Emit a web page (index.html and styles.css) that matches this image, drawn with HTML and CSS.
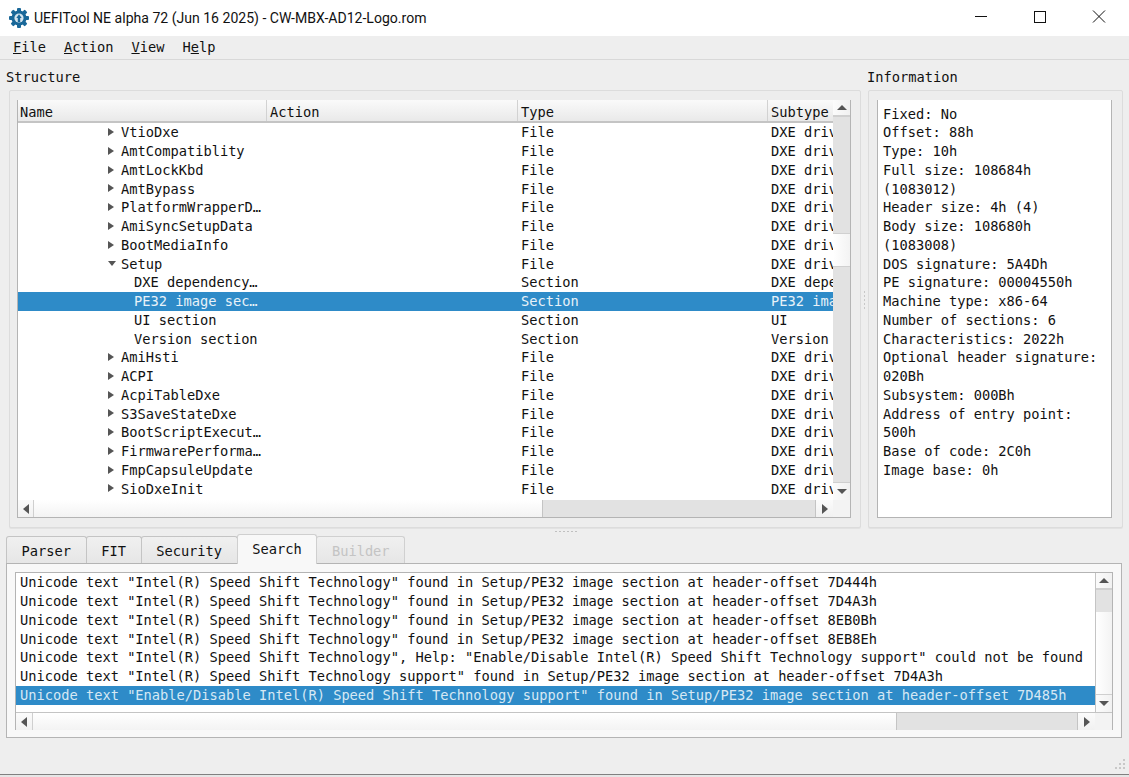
FILE: index.html
```html
<!DOCTYPE html>
<html lang="en">
<head>
<meta charset="utf-8">
<title>UEFITool NE alpha 72 (Jun 16 2025) - CW-MBX-AD12-Logo.rom</title>
<link rel="stylesheet" href="styles.css">
</head>
<body>
<div class="window">
  <header class="titlebar">
    <svg class="appicon" viewBox="0 0 20 20" width="20" height="20"><circle cx="10" cy="10" r="7.6" fill="#1a6899"/><g fill="#1a6899"><rect x="8" y="0" width="4" height="20" rx="1"/><rect x="0" y="8" width="20" height="4" rx="1"/><rect x="8" y="0" width="4" height="20" rx="1" transform="rotate(45 10 10)"/><rect x="8" y="0" width="4" height="20" rx="1" transform="rotate(-45 10 10)"/></g><circle cx="10" cy="10" r="4.6" fill="#d4e4ee"/><path d="M8.8 14V10L7.3 10 10 6.3 12.7 10 11.2 10V14Z" fill="#1a6899"/></svg>
    <span class="title">UEFITool NE alpha 72 (Jun 16 2025) - CW-MBX-AD12-Logo.rom</span>
    <div class="winbtns">
      <svg class="winbtn" viewBox="0 0 46 36"><path d="M17 16.5H29" stroke="#111" fill="none"/></svg>
      <svg class="winbtn" viewBox="0 0 46 36"><rect x="17.5" y="11.5" width="11" height="11" stroke="#111" fill="none"/></svg>
      <svg class="winbtn" viewBox="0 0 46 36"><path d="M17 10.5L29 22.5M29 10.5L17 22.5" stroke="#111" fill="none"/></svg>
    </div>
  </header>
  <nav class="menubar">
    <span class="menu"><u>F</u>ile</span>
    <span class="menu"><u>A</u>ction</span>
    <span class="menu"><u>V</u>iew</span>
    <span class="menu">H<u>e</u>lp</span>
  </nav>
  <main class="content">
    <div class="upper">
      <section class="structure">
        <div class="label">Structure</div>
        <div class="group">
          <div class="tree">
            <div class="tree-main">
              <div class="tree-view">
                <div class="thead">
                  <span class="th c1">Name</span><span class="th c2">Action</span><span class="th c3">Type</span><span class="th c4">Subtype</span>
                </div>
                <div class="row"><span class="c1 d1"><i class="arr r"></i><b>VtioDxe</b></span><span class="c2"></span><span class="c3">File</span><span class="c4">DXE driver</span></div>
                <div class="row"><span class="c1 d1"><i class="arr r"></i><b>AmtCompatiblity</b></span><span class="c2"></span><span class="c3">File</span><span class="c4">DXE driver</span></div>
                <div class="row"><span class="c1 d1"><i class="arr r"></i><b>AmtLockKbd</b></span><span class="c2"></span><span class="c3">File</span><span class="c4">DXE driver</span></div>
                <div class="row"><span class="c1 d1"><i class="arr r"></i><b>AmtBypass</b></span><span class="c2"></span><span class="c3">File</span><span class="c4">DXE driver</span></div>
                <div class="row"><span class="c1 d1"><i class="arr r"></i><b>PlatformWrapperD…</b></span><span class="c2"></span><span class="c3">File</span><span class="c4">DXE driver</span></div>
                <div class="row"><span class="c1 d1"><i class="arr r"></i><b>AmiSyncSetupData</b></span><span class="c2"></span><span class="c3">File</span><span class="c4">DXE driver</span></div>
                <div class="row"><span class="c1 d1"><i class="arr r"></i><b>BootMediaInfo</b></span><span class="c2"></span><span class="c3">File</span><span class="c4">DXE driver</span></div>
                <div class="row"><span class="c1 d1"><i class="arr d"></i><b>Setup</b></span><span class="c2"></span><span class="c3">File</span><span class="c4">DXE driver</span></div>
                <div class="row"><span class="c1 d2"><b>DXE dependency…</b></span><span class="c2"></span><span class="c3">Section</span><span class="c4">DXE dependency</span></div>
                <div class="row sel"><span class="c1 d2"><b>PE32 image sec…</b></span><span class="c2"></span><span class="c3">Section</span><span class="c4">PE32 image</span></div>
                <div class="row"><span class="c1 d2"><b>UI section</b></span><span class="c2"></span><span class="c3">Section</span><span class="c4">UI</span></div>
                <div class="row"><span class="c1 d2"><b>Version section</b></span><span class="c2"></span><span class="c3">Section</span><span class="c4">Version</span></div>
                <div class="row"><span class="c1 d1"><i class="arr r"></i><b>AmiHsti</b></span><span class="c2"></span><span class="c3">File</span><span class="c4">DXE driver</span></div>
                <div class="row"><span class="c1 d1"><i class="arr r"></i><b>ACPI</b></span><span class="c2"></span><span class="c3">File</span><span class="c4">DXE driver</span></div>
                <div class="row"><span class="c1 d1"><i class="arr r"></i><b>AcpiTableDxe</b></span><span class="c2"></span><span class="c3">File</span><span class="c4">DXE driver</span></div>
                <div class="row"><span class="c1 d1"><i class="arr r"></i><b>S3SaveStateDxe</b></span><span class="c2"></span><span class="c3">File</span><span class="c4">DXE driver</span></div>
                <div class="row"><span class="c1 d1"><i class="arr r"></i><b>BootScriptExecut…</b></span><span class="c2"></span><span class="c3">File</span><span class="c4">DXE driver</span></div>
                <div class="row"><span class="c1 d1"><i class="arr r"></i><b>FirmwarePerforma…</b></span><span class="c2"></span><span class="c3">File</span><span class="c4">DXE driver</span></div>
                <div class="row"><span class="c1 d1"><i class="arr r"></i><b>FmpCapsuleUpdate</b></span><span class="c2"></span><span class="c3">File</span><span class="c4">DXE driver</span></div>
                <div class="row"><span class="c1 d1"><i class="arr r"></i><b>SioDxeInit</b></span><span class="c2"></span><span class="c3">File</span><span class="c4">DXE driver</span></div>
              </div>
              <div class="vbar tree-vbar">
                <div class="sb-btn up"><i class="tri tu"></i></div>
                <div class="track"><div class="thumb"></div></div>
                <div class="sb-btn dn"><i class="tri td"></i></div>
              </div>
            </div>
            <div class="hbar tree-hbar">
              <div class="hb-btn"><i class="tri tl"></i></div>
              <div class="htrack"><div class="hthumb"></div></div>
              <div class="hb-btn end"><i class="tri tr"></i></div>
              <div class="corner"></div>
            </div>
          </div>
        </div>
      </section>
      <div class="vsplit"><i></i><i></i><i></i><i></i><i></i></div>
      <section class="information">
        <div class="label">Information</div>
        <div class="group info-group">
          <div class="infotext">Fixed: No
Offset: 88h
Type: 10h
Full size: 108684h
(1083012)
Header size: 4h (4)
Body size: 108680h
(1083008)
DOS signature: 5A4Dh
PE signature: 00004550h
Machine type: x86-64
Number of sections: 6
Characteristics: 2022h
Optional header signature:
020Bh
Subsystem: 000Bh
Address of entry point:
500h
Base of code: 2C0h
Image base: 0h</div>
        </div>
      </section>
    </div>
    <div class="hsplit"><i></i><i></i><i></i><i></i><i></i><i></i></div>
    <section class="lower">
      <div class="tabs">
        <span class="tab">Parser</span>
        <span class="tab">FIT</span>
        <span class="tab">Security</span>
        <span class="tab active">Search</span>
        <span class="tab disabled">Builder</span>
      </div>
      <div class="tabpane">
        <div class="list">
          <div class="list-main">
            <div class="list-view">
              <div class="lrow">Unicode text "Intel(R) Speed Shift Technology" found in Setup/PE32 image section at header-offset 7D444h</div>
              <div class="lrow">Unicode text "Intel(R) Speed Shift Technology" found in Setup/PE32 image section at header-offset 7D4A3h</div>
              <div class="lrow">Unicode text "Intel(R) Speed Shift Technology" found in Setup/PE32 image section at header-offset 8EB0Bh</div>
              <div class="lrow">Unicode text "Intel(R) Speed Shift Technology" found in Setup/PE32 image section at header-offset 8EB8Eh</div>
              <div class="lrow">Unicode text "Intel(R) Speed Shift Technology", Help: "Enable/Disable Intel(R) Speed Shift Technology support" could not be found</div>
              <div class="lrow">Unicode text "Intel(R) Speed Shift Technology support" found in Setup/PE32 image section at header-offset 7D4A3h</div>
              <div class="lrow sel">Unicode text "Enable/Disable Intel(R) Speed Shift Technology support" found in Setup/PE32 image section at header-offset 7D485h</div>
            </div>
            <div class="vbar list-vbar">
              <div class="sb-btn up"><i class="tri tu"></i></div>
              <div class="track"><div class="thumb"></div></div>
              <div class="sb-btn dn"><i class="tri td"></i></div>
            </div>
          </div>
          <div class="hbar list-hbar">
            <div class="hb-btn"><i class="tri tl"></i></div>
            <div class="htrack"><div class="hthumb"></div></div>
            <div class="hb-btn end"><i class="tri tr"></i></div>
            <div class="corner"></div>
          </div>
        </div>
      </div>
    </section>
  </main>
  <div class="statusbar">
    <svg class="grip" viewBox="0 0 14 14" width="14" height="14"><path fill="#c8c8c8" d="M10 1h2v2h-2zM6 5h2v2H6zM10 5h2v2h-2zM2 9h2v2H2zM6 9h2v2H6zM10 9h2v2h-2z"/></svg>
  </div>
</div>
</body>
</html>
```
FILE: styles.css
```css
* { box-sizing: border-box; }
html, body { margin: 0; padding: 0; background: #eeeeee; overflow: hidden; }
body { font-family: "DejaVu Sans Mono", monospace; font-size: 13.7px; color: #111; }
.window { width: 1129px; height: 777px; display: flex; flex-direction: column; overflow: hidden; position: relative; }
.titlebar { height: 36px; background: #fff; display: flex; align-items: center; padding-left: 9px; flex: none; }
.appicon { flex: none; }
.title { font-family: Roboto, "Open Sans", sans-serif; font-size: 14.05px; margin-left: 5px; color: #111; white-space: nowrap; }
.winbtns { margin-left: auto; display: flex; gap: 13px; margin-right: 7px; }
.winbtn { width: 46px; height: 36px; display: block; }
.menubar { height: 24px; flex: none; display: flex; align-items: center; padding: 0 0 1px 13px; gap: 18px; border-bottom: 1px solid #d8d8d8; }
.menu { line-height: 21px; }
.content { flex: 1; min-height: 0; display: flex; flex-direction: column; padding: 7px 7px 0 6px; }
.upper { height: 461px; display: flex; flex: none; }
.structure { width: 855px; flex: none; display: flex; flex-direction: column; }
.information { flex: 1; min-width: 0; display: flex; flex-direction: column; margin-right: -1px; }
.label { height: 23px; line-height: 20px; flex: none; }
.information .label { margin-left: -1px; }
.group { flex: 1; min-height: 0; margin-left: 3px; border: 1px solid #dcdcdc; border-radius: 2px; padding: 9px 9px 9px 7px; background: #ededed; box-shadow: 0 1px 0 #e2e2e2; }
.tree { height: 100%; display: flex; flex-direction: column; background: #fff; border: 1px solid #b4b4b4; border-top: 0; }
.tree-main { flex: 1; min-height: 0; display: flex; }
.tree-view { width: 815px; flex: none; overflow: hidden; background: #fff; }
.thead { height: 23.3px; display: flex; background: linear-gradient(#fafafa, #e9e9e9); border-bottom: 2px solid #c4c4c4; }
.th { line-height: 24px; padding-left: 2px; border-right: 1px solid #d2d2d2; height: 21px; }
.row { height: 18.75px; display: flex; line-height: 18.75px; white-space: nowrap; }
.c1 { width: 249px; flex: none; overflow: hidden; display: block; }
.c2 { width: 251px; flex: none; }
.c3 { width: 250px; flex: none; padding-left: 3px; }
.c4 { width: 65px; flex: none; overflow: hidden; padding-left: 3px; }
.th.c2, .th.c3, .th.c4 { padding-left: 3px; }
.th.c4 { border-right: 0; }
.row b { font-weight: normal; }
.d1 { padding-left: 90px; display: flex; align-items: center; }
.d2 { padding-left: 116px; }
.arr { display: block; width: 13px; height: 8px; flex: none; position: relative; }
.arr::after { content: ""; position: absolute; left: 0; border-style: solid; border-color: transparent; }
.arr.r::after { border-width: 4.5px 0 4.5px 6px; border-left-color: #555; top: -0.5px; }
.arr.d::after { border-width: 5px 4.5px 0 4.5px; border-top-color: #555; top: 1px; }
.row.sel { background: #2e8bc8; color: #e8f2f8; }
.vbar { width: 17px; flex: none; display: flex; flex-direction: column; }
.sb-btn { flex: none; display: flex; align-items: center; justify-content: center; background: linear-gradient(to right, #fbfbfb, #f1f1f1); }
.sb-btn.up { height: 17px; border-bottom: 2px solid #d0d0d0; }
.sb-btn.dn { height: 18px; border-top: 1px solid #cfcfcf; }
.track { flex: 1; min-height: 0; background: #e2e2e2; }
.thumb { background: linear-gradient(to right, #ffffff, #f3f3f3); }
.tri { display: block; width: 0; height: 0; border-style: solid; border-color: transparent; }
.tu { border-width: 0 5px 5px 5px; border-bottom-color: #555; }
.td { border-width: 5px 5px 0 5px; border-top-color: #555; }
.tl { border-width: 5px 6px 5px 0; border-right-color: #555; }
.tr { border-width: 5px 0 5px 6px; border-left-color: #555; }
.tree-vbar .thumb { height: 34px; margin-top: 116px; border-top: 1px solid #d0d0d0; border-bottom: 1px solid #d0d0d0; }
.hbar { height: 17px; flex: none; display: flex; }
.hb-btn { width: 17px; flex: none; display: flex; align-items: center; justify-content: center; background: linear-gradient(#fbfbfb, #f1f1f1); border-right: 1px solid #cfcfcf; }
.hb-btn.end { width: 18px; border-right: 0; border-left: 1px solid #c4c4c4; }
.htrack { flex: 1; min-width: 0; background: #e2e2e2; }
.hthumb { height: 100%; background: linear-gradient(#ffffff, #f3f3f3); border-right: 1px solid #c4c4c4; }
.tree-hbar .hb-btn:first-child { width: 16px; }
.tree-hbar .hthumb { width: 509px; }
.corner { width: 17px; flex: none; background: #f3f3f3; }
.vsplit { width: 7px; flex: none; display: flex; flex-direction: column; justify-content: center; align-items: center; gap: 2px; padding-top: 5px; }
.vsplit i { width: 1px; height: 2px; background: #c8c8c8; display: block; }
.info-group { margin-left: 0; padding: 9px 10px 9px 8px; }
.infotext { height: 100%; background: #fff; border: 1px solid #b4b4b4; border-top: 0; padding: 4.55px 5px 5px; line-height: 18.75px; white-space: pre-wrap; }
.hsplit { height: 6px; flex: none; display: flex; justify-content: center; align-items: center; gap: 2px; padding-left: 4px; }
.hsplit i { width: 2px; height: 1px; background: #c0c0c0; display: block; }
.lower { height: 204px; flex: none; display: flex; flex-direction: column; }
.tabs { height: 29px; flex: none; display: flex; align-items: flex-end; position: relative; z-index: 1; }
.tab { height: 27px; line-height: 28px; padding: 0 14.6px; background: linear-gradient(#f0f0f0, #e6e6e6); border: 1px solid #c4c4c4; border-bottom: 0; border-radius: 3px 3px 0 0; margin-right: -1px; }
.tab.active { height: 30px; margin-bottom: -1px; background: #f8f8f8; border-color: #cfcfcf; position: relative; z-index: 1; }
.tab.disabled { color: #c4c4c4; border-color: #d0d0d0; }
.tabpane { height: 175px; border: 1px solid #b4b4b4; background: #f8f8f8; padding: 8px 8px 7px 8px; }
.list { height: 100%; display: flex; flex-direction: column; background: #fff; border: 1px solid #b4b4b4; border-bottom: 0; }
.list-main { flex: 1; min-height: 0; display: flex; border-bottom: 1px solid #c4c4c4; }
.list-view { flex: 1; min-width: 0; overflow: hidden; background: #fff; border-right: 1px solid #c4c4c4; padding-top: 0.3px; }
.lrow { height: 18.75px; line-height: 18.75px; padding-left: 4px; white-space: nowrap; }
.lrow.sel { background: #2e8bc8; color: #d6e8f4; }
.list-vbar { width: 16px; background: #fff; }
.list-vbar .thumb { height: 100%; margin-top: 22px; }
.list-vbar .track { overflow: hidden; }
.list-hbar .hthumb { width: 864px; }
.statusbar { height: 3px; flex: none; background: #e6e6e6; border-top: 1px solid #808080; }
.grip { position: absolute; right: 2px; bottom: 5px; }
```
